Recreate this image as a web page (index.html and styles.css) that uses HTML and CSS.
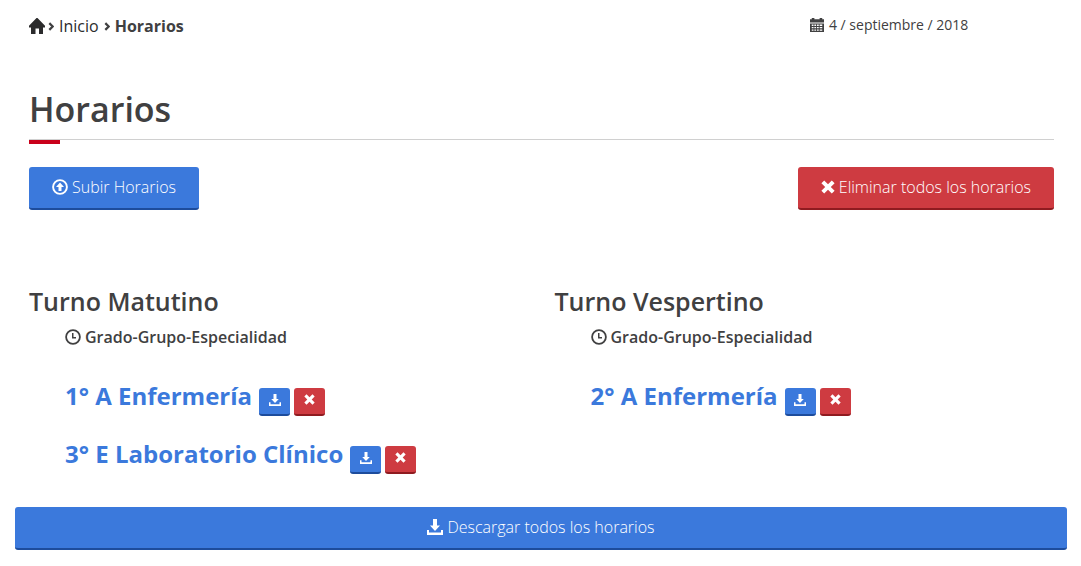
FILE: index.html
```
<!DOCTYPE html>
<html lang="es">

<head>
  <meta charset="UTF-8"/>
  <meta name="viewport" content="width=device-width, initial-scale=1.0"/>
  <title>Horarios</title>
  <link rel="stylesheet" href="styles.css">
</head>

<body>
<svg class="sprite" aria-hidden="true">
  <symbol id="home" viewBox="0 0 16 16"><path d="M8 -0.500L16.500 8.2V9.500H14V16H10V10.500H6.500V16H2V9.500H-0.500V8.200Z"/></symbol>
  <symbol id="calendar" viewBox="0 0 16 16">
    <path d="M0 1.500h2V0h3v1.500h6V0h3v1.500h2v3.700H0z"/>
    <path fill-rule="evenodd" d="M0 6.200h16V16H0zM2 7.500v1.500h2V7.500zM5 7.500v1.500h2V7.500zM8 7.500v1.500h2V7.500zM11 7.500v1.500h3V7.500zM2 10.300v1.500h2v-1.500zM5 10.300v1.500h2v-1.500zM8 10.300v1.500h2v-1.500zM11 10.300v1.500h3v-1.500zM2 13v1.500h2v-1.500zM5 13v1.500h2v-1.500zM8 13v1.500h2v-1.500zM11 13v1.500h3v-1.500z"/>
  </symbol>
  <symbol id="upload" viewBox="0 0 16 16">
    <circle cx="8" cy="8" r="6.900" fill="none" stroke="currentColor" stroke-width="1.900"/>
    <path d="M8 3.500L12 8H9.500v4h-3V8H4z"/>
  </symbol>
  <symbol id="clock" viewBox="0 0 16 16">
    <circle cx="8" cy="8" r="6.900" fill="none" stroke="currentColor" stroke-width="1.800"/>
    <path d="M7 4h1.500v4H11v1.500H7z"/>
  </symbol>
  <symbol id="remove" viewBox="0 0 14 14"><path d="M3.200 0.400L7 4.200L10.800 0.400L13.600 3.200L9.800 7L13.600 10.800L10.800 13.600L7 9.800L3.200 13.600L0.400 10.800L4.200 7L0.400 3.200Z"/></symbol>
  <symbol id="download" viewBox="0 0 16 16"><path d="M6 0h4v6.500h3L8 12L3 6.500h3zM0 11h2v2.500h12V11h2v5H0z"/></symbol>
</svg>

<main>
  <div class="content">
    <header>
      <nav class="breadcrumb" aria-label="Ruta">
        <a href="#" aria-label="Portada"><svg class="icon icon--home"><use href="#home"/></svg></a>
        <svg class="chevron" viewBox="0 0 5 8"><path d="M1 1l3 3-3 3"/></svg>
        <a href="#">Inicio</a>
        <svg class="chevron" viewBox="0 0 5 8"><path d="M1 1l3 3-3 3"/></svg>
        <strong>Horarios</strong>
      </nav>
      <time class="date" datetime="2018-09-04"><svg class="icon icon--small"><use href="#calendar"/></svg>4 / septiembre / 2018</time>
    </header>

    <h1>Horarios</h1>

    <div class="actions">
      <button class="btn btn--primary"><svg class="icon"><use href="#upload"/></svg>Subir Horarios</button>
      <button class="btn btn--danger"><svg class="icon icon--small"><use href="#remove"/></svg>Eliminar todos los horarios</button>
    </div>

    <div class="shifts">
      <section>
        <h3>Turno Matutino</h3>
        <h5><svg class="icon"><use href="#clock"/></svg>Grado-Grupo-Especialidad</h5>
        <ul>
          <li>
            <a href="#">1° A Enfermería</a>
            <button class="btn btn--mini btn--primary" aria-label="Descargar"><svg class="icon"><use href="#download"/></svg></button>
            <button class="btn btn--mini btn--danger" aria-label="Eliminar"><svg class="icon"><use href="#remove"/></svg></button>
          </li>
          <li>
            <a href="#">3° E Laboratorio Clínico</a>
            <button class="btn btn--mini btn--primary" aria-label="Descargar"><svg class="icon"><use href="#download"/></svg></button>
            <button class="btn btn--mini btn--danger" aria-label="Eliminar"><svg class="icon"><use href="#remove"/></svg></button>
          </li>
        </ul>
      </section>
      <section>
        <h3>Turno Vespertino</h3>
        <h5><svg class="icon"><use href="#clock"/></svg>Grado-Grupo-Especialidad</h5>
        <ul>
          <li>
            <a href="#">2° A Enfermería</a>
            <button class="btn btn--mini btn--primary" aria-label="Descargar"><svg class="icon"><use href="#download"/></svg></button>
            <button class="btn btn--mini btn--danger" aria-label="Eliminar"><svg class="icon"><use href="#remove"/></svg></button>
          </li>
        </ul>
      </section>
    </div>
  </div>

  <button class="btn btn--primary btn--block"><svg class="icon"><use href="#download"/></svg>Descargar todos los horarios</button>
</main>
</body>

</html>
```
FILE: styles.css
```
* {
  box-sizing: border-box;
}

body {
  margin: 0;
  background: white;
  color: #404041;
  font-family: 'Open Sans', sans-serif;
  font-size: 16px;
  line-height: 24px;
}

main {
  padding: 14px 14px 16px 15px;
}

.content {
  padding: 0 13px 0 14px;
}

.sprite {
  display: none;
}

.icon {
  width: 16px;
  height: 16px;
  flex: none;
  fill: currentColor;
  overflow: visible;
}

.icon--small {
  width: 14px;
  height: 14px;
}

.icon--home {
  display: block;
}

header {
  display: grid;
  grid-template-columns: 16fr 5fr;
  align-items: start;
}

.breadcrumb {
  display: flex;
  align-items: center;
  gap: 5px;
}

.breadcrumb a {
  color: #2b2b2c;
  text-decoration: none;
}

.breadcrumb .icon {
  margin-right: -2px;
}

.chevron {
  width: 6px;
  height: 9px;
  fill: none;
  stroke: currentColor;
  stroke-width: 2;
}

.date {
  display: flex;
  align-items: center;
  gap: 5px;
  font-size: 14px;
  line-height: 22px;
}

h1 {
  margin: 47px 0 0;
  padding-bottom: 5px;
  border-bottom: 1px solid #d0d0d0;
  font-size: 34px;
  font-weight: 600;
  line-height: 49px;
  position: relative;
}

h1::after {
  content: '';
  position: absolute;
  left: 0;
  bottom: -5px;
  width: 31px;
  height: 4px;
  background: #c9001a;
}

.actions {
  display: flex;
  justify-content: space-between;
  padding-top: 27px;
}

.btn {
  display: inline-flex;
  justify-content: center;
  align-items: center;
  gap: 4px;
  height: 43px;
  padding: 0 23px 2px;
  color: white;
  border: none;
  border-bottom: 2px solid;
  border-radius: 3px;
  font-family: inherit;
  font-size: 16px;
  font-weight: 350;
  cursor: pointer;
}

.btn--primary {
  background-color: #3b79dc;
  border-color: #1d4c9c;
}

.btn--danger {
  background-color: #ce3b41;
  border-color: #8f1b20;
}

.btn--block {
  display: flex;
  width: 100%;
  margin-top: 15px;
}

.btn--mini {
  width: 31px;
  height: 28px;
  padding: 0 0 3px;
}

.btn--mini .icon {
  width: 12px;
  height: 12px;
}

.btn--mini.btn--danger .icon {
  width: 11px;
  height: 11px;
}

.shifts {
  display: grid;
  grid-template-columns: 1fr 1fr;
  column-gap: 26px;
  padding-top: 73px;
}

h3 {
  margin: 0;
  font-size: 25px;
  font-weight: 600;
  line-height: 36px;
}

h5 {
  display: flex;
  align-items: center;
  gap: 4px;
  margin: 6px 0 0 36px;
  font-size: 16px;
  font-weight: 600;
  line-height: 24px;
}

ul {
  list-style: none;
  margin: 27px 0 0 36px;
  padding: 0;
}

li {
  display: flex;
  align-items: flex-end;
  gap: 4px;
  height: 40px;
  margin-bottom: 18px;
}

li a {
  align-self: flex-start;
  margin-right: 3px;
  color: #3b79dc;
  font-size: 24px;
  font-weight: 700;
  line-height: 40px;
  text-decoration: none;
}
```
